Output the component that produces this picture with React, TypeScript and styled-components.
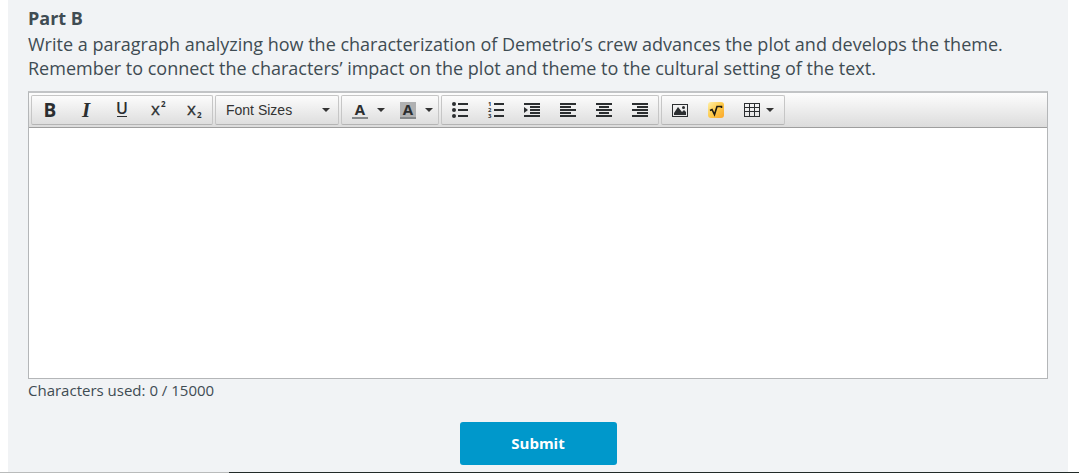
import React, { useState } from "react";
import styled, { createGlobalStyle } from "styled-components";

const GlobalStyle = createGlobalStyle`
  *, *::before, *::after { box-sizing: border-box; }
  body {
    margin: 0;
    background: #fff;
    color: #3f4c53;
    font-family: "Open Sans", "Noto Sans", sans-serif;
  }
`;

const Page = styled.div`
  min-height: 100vh;
  display: flex;
  flex-direction: column;
`;

const Panel = styled.main`
  flex: 1;
  margin: 0 11px 0 8px;
  padding: 6px 20px 7px;
  background: #f1f3f5;
  display: flex;
  flex-direction: column;
`;

const Heading = styled.h2`
  margin: 0 0 2px;
  font-size: 18px;
  line-height: 24px;
  font-weight: 700;
`;

const Prompt = styled.p`
  margin: 0 0 11px;
  font-size: 18px;
  line-height: 24px;
`;

const Editor = styled.section`
  display: flex;
  flex-direction: column;
  border: 1px solid #b4b6b8;
  border-top: 2px solid #c2c4c6;
  background: #fff;
`;

const Toolbar = styled.div`
  display: flex;
  flex-wrap: wrap;
  gap: 2px;
  padding: 2px;
  border-bottom: 1px solid #9e9e9e;
  background: linear-gradient(#fdfdfd, #dcdcdc);
`;

const Group = styled.div`
  display: flex;
  height: 30px;
  border: 1px solid #c6c6c6;
  border-bottom-color: #b4b4b4;
  border-radius: 2px;
  background: linear-gradient(#fcfcfc, #dedede);
`;

const ToolButton = styled.button<{ $width?: number; $gap?: number }>`
  width: ${(p) => p.$width ?? 36}px;
  padding: 0 0 0 10px;
  border: 0;
  background: none;
  color: #2f3335;
  font-family: inherit;
  display: flex;
  align-items: center;
  gap: ${(p) => p.$gap ?? 0}px;
  cursor: pointer;

  &:hover { background: rgba(0, 0, 0, 0.06); }
`;

const Glyph = styled.svg`
  display: block;
  flex: none;
  overflow: visible;
  fill: #2b2e30;
`;

const Caret = styled.span`
  flex: none;
  border: 4px solid transparent;
  border-top-color: #333;
  border-bottom: 0;
`;

const SelectBox = styled.label`
  display: flex;
  align-items: center;
  width: 122px;
  padding-right: 8px;
`;

const SizeSelect = styled.select`
  flex: 1;
  height: 28px;
  padding: 0 0 0 10px;
  border: 0;
  appearance: none;
  background: none;
  color: #333;
  font: 14px/20px "Liberation Sans", Arial, sans-serif;
`;

const Answer = styled.textarea`
  display: block;
  width: 100%;
  height: 250px;
  padding: 8px;
  border: 0;
  outline: 0;
  resize: none;
  background: #fff;
  color: inherit;
  font: 16px/24px "Open Sans", sans-serif;
`;

const Counter = styled.p`
  margin: 0 0 21px;
  font-size: 15px;
  line-height: 22px;
`;

const Submit = styled.button`
  align-self: center;
  width: 157px;
  height: 43px;
  padding: 0 0 2px;
  border: 0;
  border-radius: 3px;
  background: #0098cb;
  color: #fff;
  font: 700 15px/24px "Open Sans", sans-serif;
  cursor: pointer;
`;

const BottomEdge = styled.div`
  height: 1px;
  background: linear-gradient(to right, #b9bbbb 229px, #222b28 229px);
`;

const sans = '"Open Sans", sans-serif';

const BoldIcon = () => (
  <Glyph width="16" height="16">
    <text x="8" y="15" textAnchor="middle" fontFamily={sans} fontWeight="700" fontSize="19">B</text>
  </Glyph>
);
const ItalicIcon = () => (
  <Glyph width="16" height="16">
    <text x="8" y="15" textAnchor="middle" fontFamily='"Liberation Serif", serif' fontStyle="italic" fontWeight="700" fontSize="21">I</text>
  </Glyph>
);
const UnderlineIcon = () => (
  <Glyph width="16" height="16">
    <text x="8" y="12" textAnchor="middle" fontFamily={sans} fontWeight="600" fontSize="16">U</text>
    <rect x="3" y="14" width="10" height="1" />
  </Glyph>
);
const ScriptIcon = ({ sub }: { sub?: boolean }) => (
  <Glyph width="16" height="16">
    <text x="1" y="13" fontFamily={sans} fontWeight="400" fontSize="17" stroke="#2b2e30" strokeWidth="0.3">x</text>
    <text x="11" y={sub ? 16 : 5} fontFamily={sans} fontWeight="700" fontSize="8">2</text>
  </Glyph>
);
const TextColorIcon = () => (
  <Glyph width="16" height="16">
    <text x="8" y="13" textAnchor="middle" fontFamily={sans} fontWeight="700" fontSize="15">A</text>
    <rect y="15" width="16" height="2" fill="#85888a" />
  </Glyph>
);
const FillColorIcon = () => (
  <Glyph width="16" height="16">
    <rect width="16" height="17" fill="#b0b1b2" />
    <text x="8" y="13" textAnchor="middle" fontFamily={sans} fontWeight="700" fontSize="15">A</text>
    <rect y="15" width="16" height="2" fill="#85888a" />
  </Glyph>
);
const BulletsIcon = () => (
  <Glyph width="16" height="16">
    {[2, 8, 14].map((y) => (
      <g key={y}>
        <circle cx="2" cy={y} r="2" />
        <rect x="6" y={y - 1} width="10" height="2" />
      </g>
    ))}
  </Glyph>
);
const NumbersIcon = () => (
  <Glyph width="16" height="16">
    {[2, 8, 14].map((y, i) => (
      <g key={y}>
        <text x="0" y={y + 2} fontFamily={sans} fontWeight="700" fontSize="6">{i + 1}</text>
        <rect x="6" y={y - 1} width="10" height="2" />
      </g>
    ))}
  </Glyph>
);

type Line = [x: number, width: number];
const Lines = ({ rows, arrow }: { rows: Line[]; arrow?: boolean }) => (
  <Glyph width="16" height="16">
    {rows.map(([x, w], i) => (
      <rect key={i} x={x} y={1 + i * 3} width={w} height="2" />
    ))}
    {arrow && <path d="M0 5l4 3-4 3z" />}
  </Glyph>
);
const IndentIcon = () => <Lines arrow rows={[[0, 16], [6, 10], [6, 10], [6, 10], [0, 16]]} />;
const AlignLeftIcon = () => <Lines rows={[[0, 16], [0, 11], [0, 16], [0, 11], [0, 16]]} />;
const AlignCenterIcon = () => <Lines rows={[[0, 16], [3, 10], [0, 16], [3, 10], [0, 16]]} />;
const AlignRightIcon = () => <Lines rows={[[0, 16], [5, 11], [0, 16], [5, 11], [0, 16]]} />;

const ImageIcon = () => (
  <Glyph width="16" height="16">
    <path fillRule="evenodd" d="M0 2h16v13H0zM1 3v11h14V3z" />
    <path d="M2 13V11l4-6 4 5 2-2 2 2v3z" />
    <circle cx="11.5" cy="5.5" r="1.5" />
  </Glyph>
);
const FormulaIcon = () => (
  <Glyph width="16" height="16">
    <defs>
      <linearGradient id="formula" x1="0" y1="0" x2="1" y2="1">
        <stop offset="0" stopColor="#fff0a8" />
        <stop offset="0.5" stopColor="#fdca4c" />
        <stop offset="1" stopColor="#fba72a" />
      </linearGradient>
    </defs>
    <rect width="16" height="16" rx="3" fill="url(#formula)" />
    <path d="M2 8.5L4 7.5L6.5 12.5L9 4.5H13.5V6" fill="none" stroke="#1c1a12" strokeWidth="1.6" />
  </Glyph>
);
const TableIcon = () => (
  <Glyph width="16" height="14">
    <path fillRule="evenodd" d="M0 0h16v14H0zM1 1v3h4V1zM6 1v3h4V1zM11 1v3h4V1zM1 5v3h4V5zM6 5v3h4V5zM11 5v3h4V5zM1 9v4h4V9zM6 9v4h4V9zM11 9v4h4V9z" />
  </Glyph>
);

type Tool = { label: string; Icon: React.FC; width?: number; menuGap?: number };

const styleTools: Tool[] = [
  { label: "Bold", Icon: BoldIcon },
  { label: "Italic", Icon: ItalicIcon },
  { label: "Underline", Icon: UnderlineIcon },
  { label: "Superscript", Icon: () => <ScriptIcon /> },
  { label: "Subscript", Icon: () => <ScriptIcon sub /> },
];
const colorTools: Tool[] = [
  { label: "Text color", Icon: TextColorIcon, width: 48, menuGap: 9 },
  { label: "Background color", Icon: FillColorIcon, width: 48, menuGap: 9 },
];
const paragraphTools: Tool[] = [
  { label: "Bullet list", Icon: BulletsIcon },
  { label: "Numbered list", Icon: NumbersIcon },
  { label: "Increase indent", Icon: IndentIcon },
  { label: "Align left", Icon: AlignLeftIcon },
  { label: "Align center", Icon: AlignCenterIcon },
  { label: "Align right", Icon: AlignRightIcon },
];
const insertTools: Tool[] = [
  { label: "Insert image", Icon: ImageIcon },
  { label: "Insert formula", Icon: FormulaIcon },
  { label: "Table", Icon: TableIcon, width: 50, menuGap: 6 },
];

const ToolGroup = ({ tools }: { tools: Tool[] }) => (
  <Group role="group">
    {tools.map(({ label, Icon, width, menuGap }) => (
      <ToolButton key={label} type="button" aria-label={label} $width={width} $gap={menuGap}>
        <Icon />
        {menuGap && <Caret />}
      </ToolButton>
    ))}
  </Group>
);

const LIMIT = 15000;

export default function App() {
  const [text, setText] = useState("");
  return (
    <Page>
      <GlobalStyle />
      <Panel>
        <Heading>Part B</Heading>
        <Prompt id="prompt">
          Write a paragraph analyzing how the characterization of Demetrio’s crew advances the plot and
          develops the theme. Remember to connect the characters’ impact on the plot and theme to the
          cultural setting of the text.
        </Prompt>
        <Editor>
          <Toolbar role="toolbar" aria-label="Formatting">
            <ToolGroup tools={styleTools} />
            <Group>
              <SelectBox>
                <SizeSelect aria-label="Font Sizes" defaultValue="">
                  <option value="">Font Sizes</option>
                  <option>12pt</option>
                  <option>14pt</option>
                  <option>18pt</option>
                </SizeSelect>
                <Caret />
              </SelectBox>
            </Group>
            <ToolGroup tools={colorTools} />
            <ToolGroup tools={paragraphTools} />
            <ToolGroup tools={insertTools} />
          </Toolbar>
          <Answer
            aria-labelledby="prompt"
            maxLength={LIMIT}
            value={text}
            onChange={(e) => setText(e.target.value)}
          />
        </Editor>
        <Counter>Characters used: {text.length} / {LIMIT}</Counter>
        <Submit type="button">Submit</Submit>
      </Panel>
      <BottomEdge />
    </Page>
  );
}
